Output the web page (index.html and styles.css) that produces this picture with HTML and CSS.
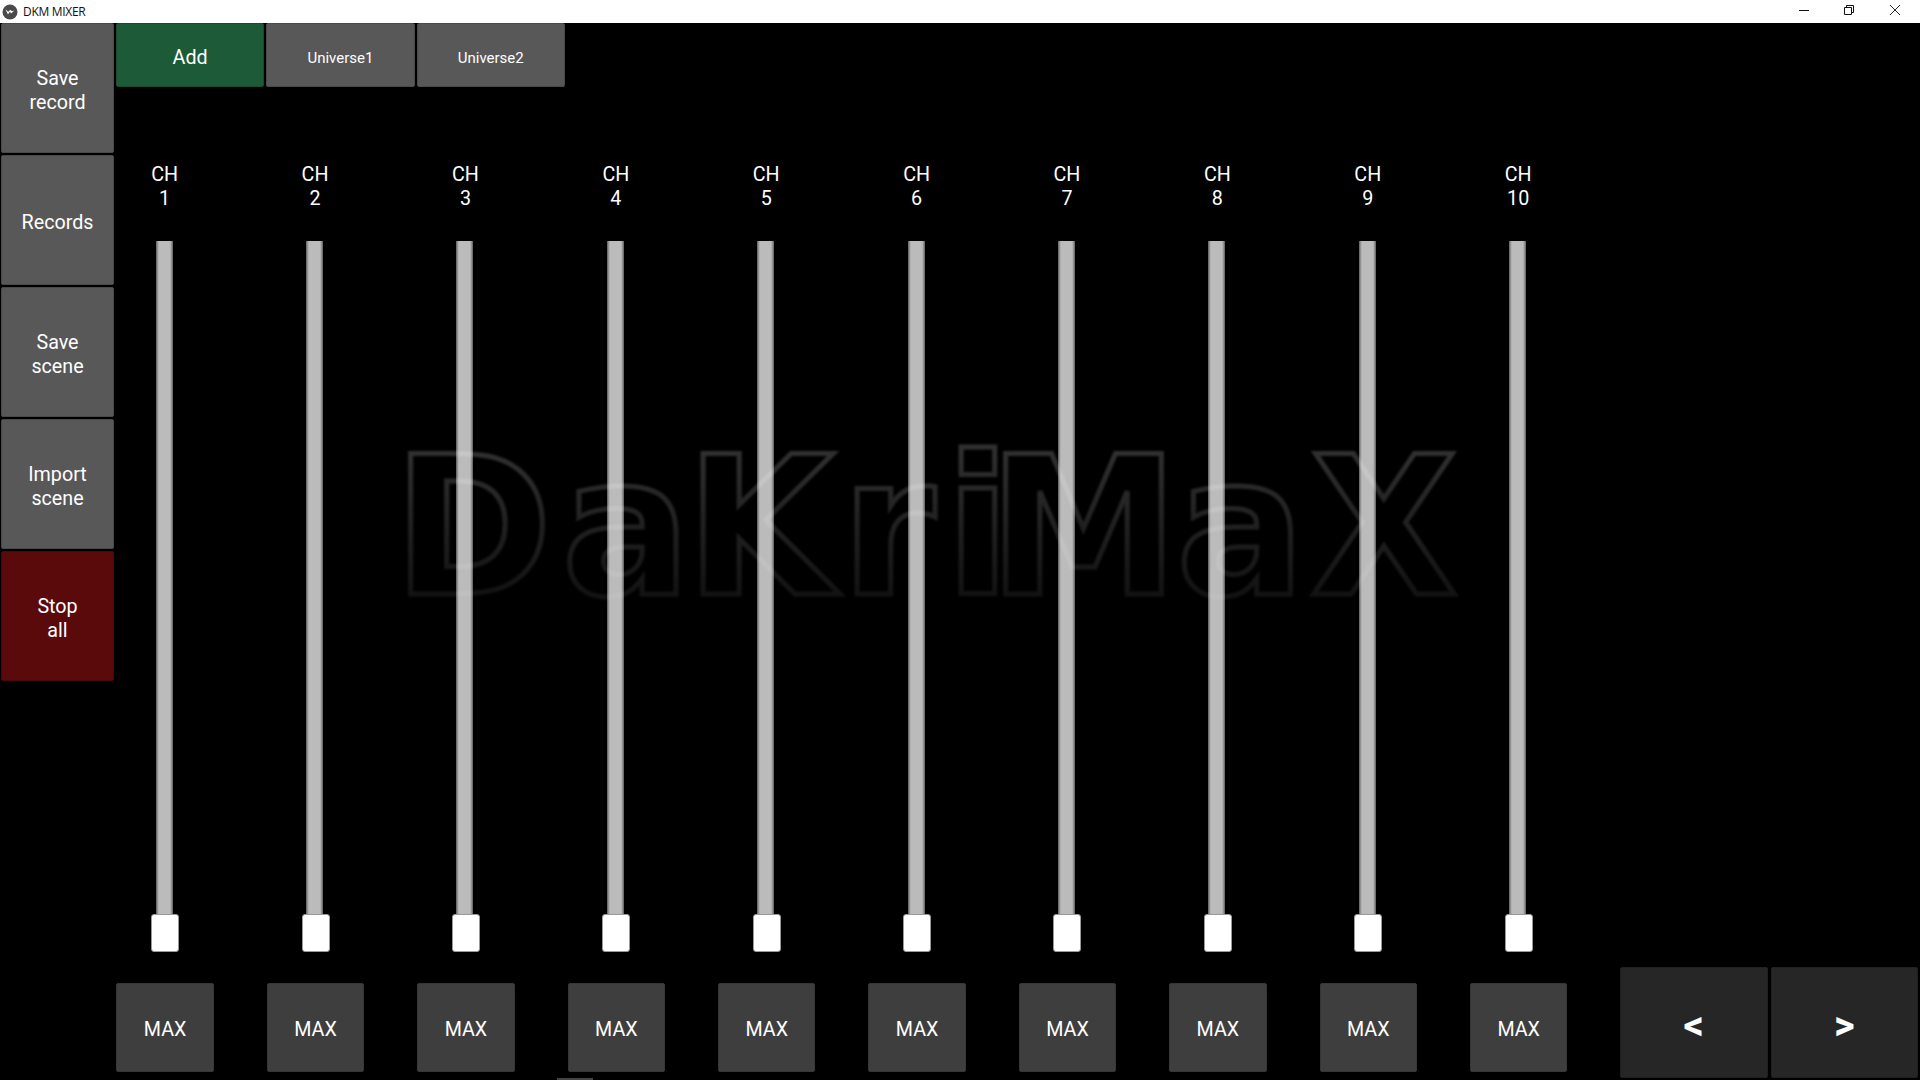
FILE: index.html
```html
<!DOCTYPE html>
<html lang="en">
<head>
    <meta charset="UTF-8">
    <meta name="viewport" content="width=device-width, initial-scale=1.0">
    <title>DKM MIXER</title>
    <link rel="stylesheet" href="styles.css">
</head>
<body>
    <header class="titlebar">
        <svg class="app-icon" viewBox="0 0 16 16">
            <circle cx="8" cy="8" r="7.5" fill="#4a4a4a"/>
            <path d="M3.5 5.5 L6 10.5 L8 7.5 L9 9.5 L12.5 6.5 L10 7.2 L8.8 6 L7.5 6.5 L6.3 7.8 Z" fill="#fff"/>
        </svg>
        <span class="app-name">DKM MIXER</span>
        <div class="window-controls">
            <svg class="win-btn win-min" viewBox="0 0 10 10"><path d="M0 5.5H10" stroke="#111" fill="none"/></svg>
            <svg class="win-btn" viewBox="0 0 10 10"><path d="M.5 2.5H7.5V9.5H.5Z M2.5 2.5V.5H9.5V7.5H7.5" stroke="#111" fill="none"/></svg>
            <svg class="win-btn" viewBox="0 0 10 10"><path d="M0 0L10 10M10 0L0 10" stroke="#111" stroke-width="0.9" fill="none"/></svg>
        </div>
    </header>

    <main class="app">
        <nav class="sidebar">
            <button class="btn side-btn">Save<br>record</button>
            <button class="btn side-btn">Records</button>
            <button class="btn side-btn">Save<br>scene</button>
            <button class="btn side-btn">Import<br>scene</button>
            <button class="btn side-btn btn-stop">Stop<br>all</button>
        </nav>

        <section class="content">
            <div class="tabs">
                <button class="btn tab btn-add">Add</button>
                <button class="btn tab tab-small">Universe1</button>
                <button class="btn tab tab-small">Universe2</button>
            </div>

            <div class="mixer">
                <div class="channels">
                    <div class="channel">
                        <div class="ch-label">CH<br>1</div>
                        <div class="track"></div>
                        <div class="handle"></div>
                        <button class="btn max-btn">MAX</button>
                    </div>
                    <div class="channel">
                        <div class="ch-label">CH<br>2</div>
                        <div class="track"></div>
                        <div class="handle"></div>
                        <button class="btn max-btn">MAX</button>
                    </div>
                    <div class="channel">
                        <div class="ch-label">CH<br>3</div>
                        <div class="track"></div>
                        <div class="handle"></div>
                        <button class="btn max-btn">MAX</button>
                    </div>
                    <div class="channel">
                        <div class="ch-label">CH<br>4</div>
                        <div class="track"></div>
                        <div class="handle"></div>
                        <button class="btn max-btn">MAX</button>
                    </div>
                    <div class="channel">
                        <div class="ch-label">CH<br>5</div>
                        <div class="track"></div>
                        <div class="handle"></div>
                        <button class="btn max-btn">MAX</button>
                    </div>
                    <div class="channel">
                        <div class="ch-label">CH<br>6</div>
                        <div class="track"></div>
                        <div class="handle"></div>
                        <button class="btn max-btn">MAX</button>
                    </div>
                    <div class="channel">
                        <div class="ch-label">CH<br>7</div>
                        <div class="track"></div>
                        <div class="handle"></div>
                        <button class="btn max-btn">MAX</button>
                    </div>
                    <div class="channel">
                        <div class="ch-label">CH<br>8</div>
                        <div class="track"></div>
                        <div class="handle"></div>
                        <button class="btn max-btn">MAX</button>
                    </div>
                    <div class="channel">
                        <div class="ch-label">CH<br>9</div>
                        <div class="track"></div>
                        <div class="handle"></div>
                        <button class="btn max-btn">MAX</button>
                    </div>
                    <div class="channel">
                        <div class="ch-label">CH<br>10</div>
                        <div class="track"></div>
                        <div class="handle"></div>
                        <button class="btn max-btn">MAX</button>
                    </div>
                </div>

                <div class="pager">
                    <button class="btn page-btn">&lt;</button>
                    <button class="btn page-btn">&gt;</button>
                </div>
            </div>
        </section>
    </main>

    <!-- watermark sits over the faders, they show through it -->
    <svg class="watermark" viewBox="0 0 1920 1080">
        <defs>
            <linearGradient id="wm-fade" gradientUnits="userSpaceOnUse" x1="0" y1="450" x2="0" y2="600">
                <stop offset="0" stop-color="#fff" stop-opacity="0.19"/>
                <stop offset="1" stop-color="#fff" stop-opacity="0.07"/>
            </linearGradient>
        </defs>
        <text class="watermark-text" x="393 561.6 685.6 841 945 988 1176 1310" y="594" fill="none" stroke="url(#wm-fade)" stroke-width="5">DaKriMaX</text>
    </svg>

    <div class="scroll-hint"></div>
</body>
</html>
```

FILE: styles.css
```css
html, body {
    height: 100%;
}

body {
    margin: 0;
    height: 1080px;
    overflow: hidden;
    position: relative;
    display: flex;
    flex-direction: column;
    background: #000;
    color: #fff;
    font-family: Roboto, sans-serif;
}

/* Title bar */
.titlebar {
    height: 23px;
    flex: none;
    display: flex;
    align-items: center;
    background: #fff;
    color: #111;
}

.app-icon {
    width: 16px;
    height: 16px;
    margin-left: 2px;
}

.app-name {
    margin-left: 5px;
    font-family: "Open Sans", sans-serif;
    font-size: 12px;
    letter-spacing: -0.3px;
}

.window-controls {
    margin-left: auto;
    margin-bottom: 3px;
    display: flex;
    gap: 36px;
    padding-right: 20px;
}

.win-btn {
    width: 10px;
    height: 10px;
}

.win-min {
    margin-right: -1px;
}

/* Main layout */
.app {
    flex: 1;
    display: flex;
    min-height: 0;
}

.btn {
    margin: 0;
    padding: 0;
    border: 1px solid #4a4a4a;
    border-radius: 2px;
    background: #585858;
    color: #fff;
    font-family: Roboto, sans-serif;
    font-size: 19.7px;
    line-height: 24px;
}

.sidebar {
    width: 113px;
    margin-left: 1px;
    flex: none;
    display: flex;
    flex-direction: column;
    gap: 2px;
}

.side-btn {
    height: 130px;
    padding-top: 5px;
}

.btn-stop {
    background: #5a0a0a;
    border-color: #4a0808;
}

.content {
    flex: 1;
    margin-left: 2px;
    display: flex;
    flex-direction: column;
    min-width: 0;
}

.tabs {
    height: 64px;
    flex: none;
    display: flex;
    gap: 2px;
}

.tab {
    width: 148.3px;
    padding-top: 5px;
}

.tab-small {
    font-size: 15px;
}

.btn-add {
    background: #1c5a38;
    border-color: #174a2e;
}

/* Faders */
.mixer {
    flex: 1;
    min-height: 0;
    display: flex;
    padding-top: 75px;
    padding-bottom: 2px;
}

.channels {
    display: flex;
    gap: 52.9px;
    margin-left: 0.4px;
    margin-bottom: 6px;
}

.channel {
    width: 97.5px;
    display: flex;
    flex-direction: column;
    align-items: center;
}

.ch-label {
    font-size: 19.7px;
    line-height: 24px;
    text-align: center;
    padding-top: 1px;
    margin-bottom: 30px;
    margin-right: 1px;
}

.track {
    flex: 1;
    width: 17px;
    margin-right: 2px;
    background: linear-gradient(to right, #5c5c5c 0, #a4a4a4 2px, #bbb 3px, #bbb 14px, #a4a4a4 15px, #5c5c5c 100%);
}

.handle {
    width: 28px;
    height: 38px;
    margin-bottom: 31px;
    box-sizing: border-box;
    background: #fff;
    border: 1px solid #999;
    border-radius: 3px;
}

.max-btn {
    width: 97.5px;
    height: 89px;
    padding-top: 4px;
    background: #3e3e3e;
    border-color: #363636;
}

.pager {
    align-self: flex-end;
    margin-left: 52.6px;
    display: flex;
    gap: 3px;
}

.page-btn {
    width: 147.5px;
    height: 111px;
    padding-top: 6px;
    background: #262626;
    border-color: #202020;
    font-size: 40px;
    font-weight: bold;
}

/* Overlays */
.watermark {
    position: absolute;
    left: 0;
    top: 0;
    width: 1920px;
    height: 1080px;
    pointer-events: none;
    filter: blur(1px);
}

.watermark-text {
    font-family: "DejaVu Sans", sans-serif;
    font-weight: bold;
    font-size: 192px;
}

.scroll-hint {
    position: absolute;
    left: 557px;
    top: 1078px;
    width: 36px;
    height: 2px;
    background: #444;
}
```
